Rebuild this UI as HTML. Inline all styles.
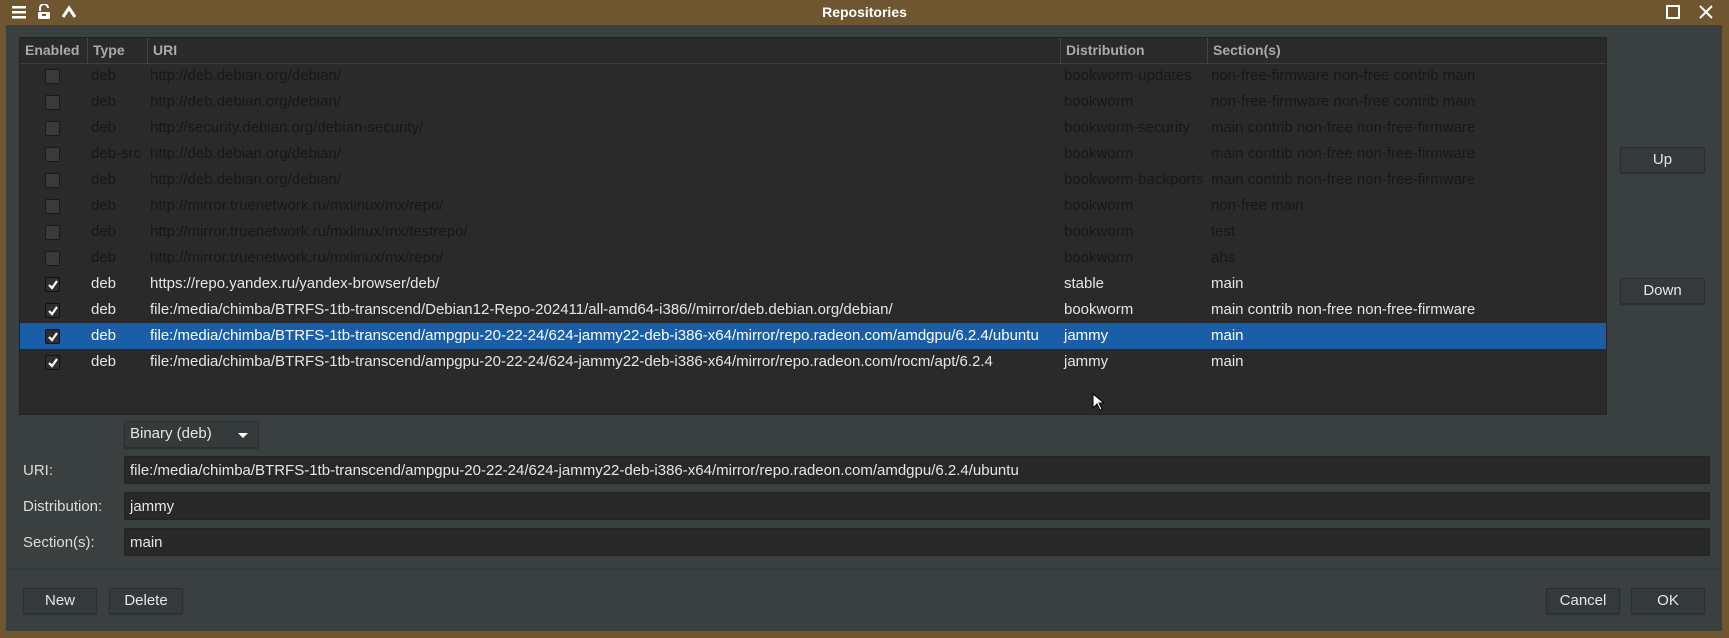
<!DOCTYPE html>
<html><head><style>
*{margin:0;padding:0;box-sizing:border-box}
body{width:1729px;height:638px;background:#6f5631;font-family:"Liberation Sans","DejaVu Sans",sans-serif;font-size:15px;position:relative;overflow:hidden}
.a{position:absolute;white-space:nowrap}
#win{position:absolute;left:6px;top:25px;width:1716px;height:606px;background:#3a3f40}
#title{left:0;top:0;width:1729px;height:25px;color:#fff;font-weight:bold;font-size:14px;text-align:center;line-height:25px}
#tbl{left:19px;top:37px;width:1588px;height:378px;background:#2a2a2a;border:1px solid #222}
.hd{position:absolute;top:0;height:25px;line-height:25px;color:#a9aaa9;font-weight:bold;border-left:1px solid #444;padding-left:5px;font-size:14px}
.row{position:absolute;left:0;width:1586px;height:26px;line-height:26px;color:#171717}
.row.en{color:#e6e6e6}
.row.sel{background:#1b5ea8;color:#fff}
.row span{position:absolute}
.cb{position:absolute;left:25px;top:6px;width:15px;height:15px;border:1px solid #1a1a1a;border-radius:2px;background:#3a3a3a}
.en .cb{background:#2e2e2e;border-color:#111}
.cb svg{position:absolute;left:1px;top:1px}
.btn{position:absolute;background:#343a3b;border:1px solid #2a2e2f;border-radius:2px;color:#e6e6e6;text-align:center;line-height:24px;box-shadow:0 1px 1px #2b3030}
.fld{position:absolute;left:124px;width:1586px;height:28px;background:#282828;border:1px solid #232323;border-radius:2px;color:#e6e6e6;line-height:27px;padding-left:5px}
.lbl{position:absolute;left:23px;color:#ddd}
</style></head><body>
<div class="a" id="title">Repositories</div>
<svg class="a" style="left:12px;top:5px" width="14" height="14"><rect x="0" y="1" width="14" height="2.5" fill="#fff"/><rect x="0" y="6" width="14" height="2.5" fill="#fff"/><rect x="0" y="11" width="14" height="2.5" fill="#fff"/></svg>
<svg class="a" style="left:37px;top:4px" width="14" height="16"><path d="M3 7V4a4 4 0 0 1 8 0" stroke="#fff" stroke-width="2" fill="none"/><rect x="1" y="8" width="12" height="7" rx="1" fill="#fff"/><rect x="5" y="10" width="4" height="2" fill="#6f5631"/></svg>
<svg class="a" style="left:62px;top:5px" width="14" height="14"><path d="M1 12L7 3l6 9" stroke="#fff" stroke-width="3" fill="none"/></svg>
<svg class="a" style="left:1666px;top:5px" width="14" height="14"><rect x="1" y="1" width="12" height="12" stroke="#fff" stroke-width="2" fill="none"/></svg>
<svg class="a" style="left:1699px;top:5px" width="14" height="14"><path d="M1 1L13 13M13 1L1 13" stroke="#fff" stroke-width="2"/></svg>
<div id="win"></div>
<div class="a" id="tbl">
<div class="hd" style="left:0;border:none;width:68px">Enabled</div>
<div class="hd" style="left:67px">Type</div>
<div class="hd" style="left:127px">URI</div>
<div class="hd" style="left:1040px">Distribution</div>
<div class="hd" style="left:1187px">Section(s)</div>
<div style="position:absolute;left:0;top:25px;width:1586px;height:1px;background:#3e3e3e"></div>
</div>
<div class="a" style="left:20px;top:63px;width:1586px">
<div class="row" style="top:0"><div class="cb"></div><span style="left:71px">deb</span><span style="left:130px">http://deb.debian.org/debian/</span><span style="left:1044px">bookworm-updates</span><span style="left:1191px">non-free-firmware non-free contrib main</span></div>
<div class="row" style="top:26px"><div class="cb"></div><span style="left:71px">deb</span><span style="left:130px">http://deb.debian.org/debian/</span><span style="left:1044px">bookworm</span><span style="left:1191px">non-free-firmware non-free contrib main</span></div>
<div class="row" style="top:52px"><div class="cb"></div><span style="left:71px">deb</span><span style="left:130px">http://security.debian.org/debian-security/</span><span style="left:1044px">bookworm-security</span><span style="left:1191px">main contrib non-free non-free-firmware</span></div>
<div class="row" style="top:78px"><div class="cb"></div><span style="left:71px">deb-src</span><span style="left:130px">http://deb.debian.org/debian/</span><span style="left:1044px">bookworm</span><span style="left:1191px">main contrib non-free non-free-firmware</span></div>
<div class="row" style="top:104px"><div class="cb"></div><span style="left:71px">deb</span><span style="left:130px">http://deb.debian.org/debian/</span><span style="left:1044px">bookworm-backports</span><span style="left:1191px">main contrib non-free non-free-firmware</span></div>
<div class="row" style="top:130px"><div class="cb"></div><span style="left:71px">deb</span><span style="left:130px">http://mirror.truenetwork.ru/mxlinux/mx/repo/</span><span style="left:1044px">bookworm</span><span style="left:1191px">non-free main</span></div>
<div class="row" style="top:156px"><div class="cb"></div><span style="left:71px">deb</span><span style="left:130px">http://mirror.truenetwork.ru/mxlinux/mx/testrepo/</span><span style="left:1044px">bookworm</span><span style="left:1191px">test</span></div>
<div class="row" style="top:182px"><div class="cb"></div><span style="left:71px">deb</span><span style="left:130px">http://mirror.truenetwork.ru/mxlinux/mx/repo/</span><span style="left:1044px">bookworm</span><span style="left:1191px">ahs</span></div>
<div class="row en" style="top:208px"><div class="cb"><svg width="12" height="12"><path d="M2 6l3 3 5-7" stroke="#fff" stroke-width="2.2" fill="none"/></svg></div><span style="left:71px">deb</span><span style="left:130px">https://repo.yandex.ru/yandex-browser/deb/</span><span style="left:1044px">stable</span><span style="left:1191px">main</span></div>
<div class="row en" style="top:234px"><div class="cb"><svg width="12" height="12"><path d="M2 6l3 3 5-7" stroke="#fff" stroke-width="2.2" fill="none"/></svg></div><span style="left:71px">deb</span><span style="left:130px">file:/media/chimba/BTRFS-1tb-transcend/Debian12-Repo-202411/all-amd64-i386//mirror/deb.debian.org/debian/</span><span style="left:1044px">bookworm</span><span style="left:1191px">main contrib non-free non-free-firmware</span></div>
<div class="row en sel" style="top:260px"><div class="cb"><svg width="12" height="12"><path d="M2 6l3 3 5-7" stroke="#fff" stroke-width="2.2" fill="none"/></svg></div><span style="left:71px">deb</span><span style="left:130px">file:/media/chimba/BTRFS-1tb-transcend/ampgpu-20-22-24/624-jammy22-deb-i386-x64/mirror/repo.radeon.com/amdgpu/6.2.4/ubuntu</span><span style="left:1044px">jammy</span><span style="left:1191px">main</span></div>
<div class="row en" style="top:286px"><div class="cb"><svg width="12" height="12"><path d="M2 6l3 3 5-7" stroke="#fff" stroke-width="2.2" fill="none"/></svg></div><span style="left:71px">deb</span><span style="left:130px">file:/media/chimba/BTRFS-1tb-transcend/ampgpu-20-22-24/624-jammy22-deb-i386-x64/mirror/repo.radeon.com/rocm/apt/6.2.4</span><span style="left:1044px">jammy</span><span style="left:1191px">main</span></div>
</div>
<svg class="a" style="left:1092px;top:393px" width="12" height="18"><path d="M1 1v14l4-4 3 6 2-1-3-6h5z" fill="#fff" stroke="#000"/></svg>
<div class="btn" style="left:1620px;top:147px;width:85px;height:26px">Up</div>
<div class="btn" style="left:1620px;top:278px;width:85px;height:26px">Down</div>
<div class="btn" style="left:124px;top:421px;width:135px;height:27px;text-align:left;padding-left:5px;background:#353a3b">Binary (deb)<svg style="position:absolute;right:10px;top:11px" width="10" height="6"><path d="M0 0h10L5 5z" fill="#fff"/></svg></div>
<div class="lbl" style="top:462px">URI:</div>
<div class="fld" style="top:456px">file:/media/chimba/BTRFS-1tb-transcend/ampgpu-20-22-24/624-jammy22-deb-i386-x64/mirror/repo.radeon.com/amdgpu/6.2.4/ubuntu</div>
<div class="lbl" style="top:498px">Distribution:</div>
<div class="fld" style="top:492px">jammy</div>
<div class="lbl" style="top:534px">Section(s):</div>
<div class="fld" style="top:528px">main</div>
<div class="a" style="left:6px;top:568px;width:1716px;height:1px;background:#353a3b"></div>
<div class="btn" style="left:23px;top:588px;width:74px;height:26px">New</div>
<div class="btn" style="left:109px;top:588px;width:74px;height:26px">Delete</div>
<div class="btn" style="left:1546px;top:588px;width:74px;height:26px">Cancel</div>
<div class="btn" style="left:1631px;top:588px;width:74px;height:26px">OK</div>
</body></html>
